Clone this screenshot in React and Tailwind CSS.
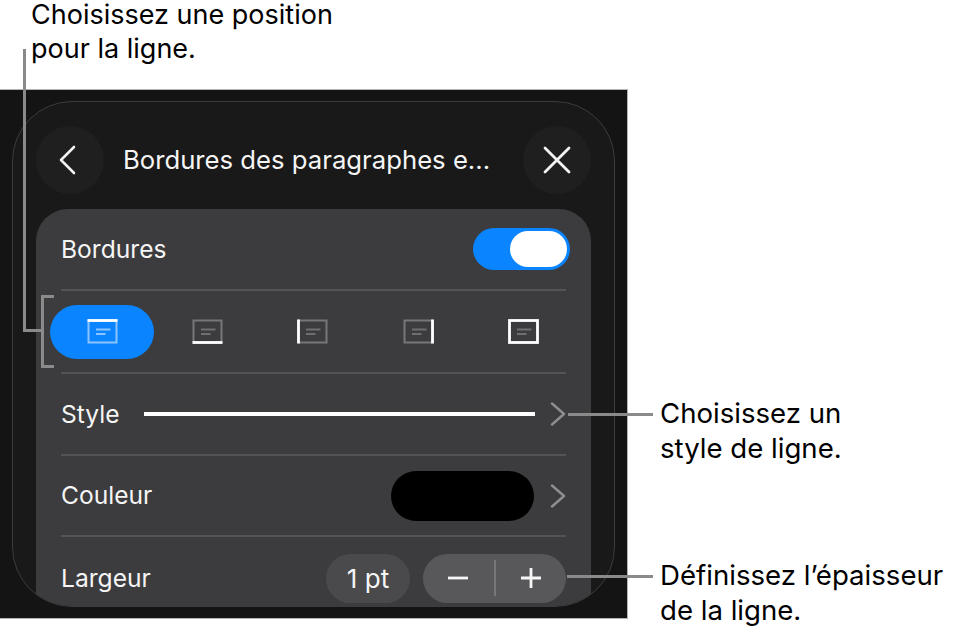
import React from "react";

// one position glyph: grey box, two text lines, highlighted edge(s) in white
const BorderIcon = ({ edge, selected }) => {
  const muted = selected ? "#8cc4ff" : "#77777a";
  const lines = selected ? "#8cc4ff" : "#6f6f72";
  return (
    <svg width="31" height="25" viewBox="0 0 31 25" fill="none">
      <rect x="1.5" y="1.5" width="28" height="22" stroke={edge === "all" ? "#fff" : muted} strokeWidth={edge === "all" ? 2.8 : 2} />
      <path d="M9 10.5h14.5M9 15h9.5" stroke={lines} strokeWidth="1.8" />
      {edge === "top" && <path d="M.5 1.5h30" stroke="#fff" strokeWidth="2.8" />}
      {edge === "bottom" && <path d="M.5 23.5h30" stroke="#fff" strokeWidth="2.8" />}
      {edge === "left" && <path d="M1.5 .5v24" stroke="#fff" strokeWidth="2.8" />}
      {edge === "right" && <path d="M29.5 .5v24" stroke="#fff" strokeWidth="2.8" />}
    </svg>
  );
};

const Chevron = () => (
  <svg width="16" height="24" viewBox="0 0 16 24" fill="none" className="shrink-0">
    <path d="M2 1.5 14 12 2 22.5" stroke="#8e8e90" strokeWidth="2.4" strokeLinecap="round" strokeLinejoin="round" />
  </svg>
);

const edges = ["top", "bottom", "left", "right", "all"];

const App = () => {
  return (
    <div className="relative w-[960px] h-[628px] overflow-hidden bg-white font-['Inter',sans-serif] text-black">
      <div className="absolute left-[31px] top-0 text-[27px]">
        <p className="leading-[30px]">Choisissez une position</p>
        <p className="leading-[38px]">pour la ligne.</p>
      </div>

      {/* dark screenshot area */}
      <div className="mt-[89px] w-[628px] h-[530px] bg-[#141414] border-t border-r border-b border-[#b4b4b4] pt-[11px] pl-[12px] pr-[12px]">
        <div className="w-[603px] h-[506px] rounded-[60px] border border-[#3c3c3f] bg-[#191919] overflow-hidden px-[23px] pt-[24px]">
          <div className="flex items-center h-[68px]">
            <div className="w-[68px] h-[68px] rounded-full bg-[#1f1f1f] flex items-center justify-center shrink-0">
              <svg width="20" height="30" viewBox="0 0 20 30" fill="none" className="mr-[4px]">
                <path d="M16 2 3 15l13 13" stroke="#f2f2f2" strokeWidth="2.6" strokeLinecap="round" strokeLinejoin="round" />
              </svg>
            </div>
            <div className="flex-1 pl-[19px] text-[25.7px] text-[#f5f5f5] whitespace-nowrap">Bordures des paragraphes e...</div>
            <div className="w-[68px] h-[68px] rounded-full bg-[#1f1f1f] flex items-center justify-center shrink-0">
              <svg width="30" height="30" viewBox="0 0 30 30" fill="none">
                <path d="M3 3l24 24M27 3 3 27" stroke="#f2f2f2" strokeWidth="2.8" strokeLinecap="round" />
              </svg>
            </div>
          </div>

          <div className="mt-[15px] h-[440px] rounded-[32px] bg-[#3c3c3e] px-[25px] text-[24.6px] text-[#f5f5f5]">
            <div className="h-[82px] flex items-center justify-between border-b-2 border-[#545456]">
              <span>Bordures</span>
              <div className="-mr-[4px] w-[97px] h-[42px] rounded-full bg-[#0a84ff] flex items-center justify-end pr-[3px]">
                <div className="w-[57px] h-[36px] rounded-full bg-white"></div>
              </div>
            </div>

            <div className="h-[83px] border-b-2 border-[#545456] flex items-center">
              <div className="-ml-[11px] w-[527px] shrink-0 grid grid-cols-5">
                {edges.map((edge, i) => (
                  <div key={edge} className={`h-[54px] w-[104px] rounded-full flex items-center justify-center ${i === 0 ? "bg-[#0a84ff]" : ""}`}>
                    <BorderIcon edge={edge} selected={i === 0} />
                  </div>
                ))}
              </div>
            </div>

            <div className="h-[82px] flex items-center border-b-2 border-[#545456]">
              <span>Style</span>
              <div className="ml-[24px] flex-1 h-[4px] bg-white"></div>
              <div className="ml-[15px]"><Chevron /></div>
            </div>

            <div className="h-[81px] flex items-center justify-between border-b-2 border-[#545456]">
              <span>Couleur</span>
              <div className="flex items-center gap-[16px]">
                <div className="w-[143px] h-[50px] rounded-full bg-black"></div>
                <Chevron />
              </div>
            </div>

            <div className="h-[82px] flex items-center justify-between">
              <span>Largeur</span>
              <div className="flex items-center gap-[13px]">
                <div className="w-[84px] h-[49px] rounded-full bg-[#4a4a4c] flex items-center justify-center text-[26px]">1 pt</div>
                <div className="relative w-[143px] h-[49px] rounded-full bg-[#58585a] flex items-center">
                  <div className="flex-1 flex justify-center">
                    <svg width="22" height="22" viewBox="0 0 22 22" fill="none">
                      <path d="M1 11h20" stroke="#f5f5f5" strokeWidth="2.8" />
                    </svg>
                  </div>
                  <div className="w-[2px] h-[36px] bg-[#77777a]"></div>
                  <div className="flex-1 flex justify-center">
                    <svg width="22" height="22" viewBox="0 0 22 22" fill="none">
                      <path d="M1 11h20M11 1v20" stroke="#f5f5f5" strokeWidth="2.8" />
                    </svg>
                  </div>
                </div>
              </div>
            </div>
          </div>
        </div>
      </div>

      {/* callout leaders */}
      <div className="absolute left-[23px] top-[49px] w-[20px] h-[283px] border-l-[3px] border-b-[3px] border-[#8a8a8a]"></div>
      <div className="absolute left-[41px] top-[295px] w-[13px] h-[73px] border-l-[3px] border-t-[3px] border-b-[3px] border-[#8a8a8a]"></div>
      <div className="absolute left-[568px] top-[413px] w-[85px] h-[3px] bg-[#8a8a8a]"></div>
      <div className="absolute left-[567px] top-[575px] w-[86px] h-[3px] bg-[#8a8a8a]"></div>

      <div className="absolute left-[660px] top-[396px] text-[27.6px] leading-[35px]">
        <p>Choisissez un</p>
        <p>style de ligne.</p>
      </div>
      <div className="absolute left-[660px] top-[558px] text-[27.6px] leading-[35px] whitespace-nowrap">
        <p>Définissez l’épaisseur</p>
        <p>de la ligne.</p>
      </div>
    </div>
  );
};

export default App;
